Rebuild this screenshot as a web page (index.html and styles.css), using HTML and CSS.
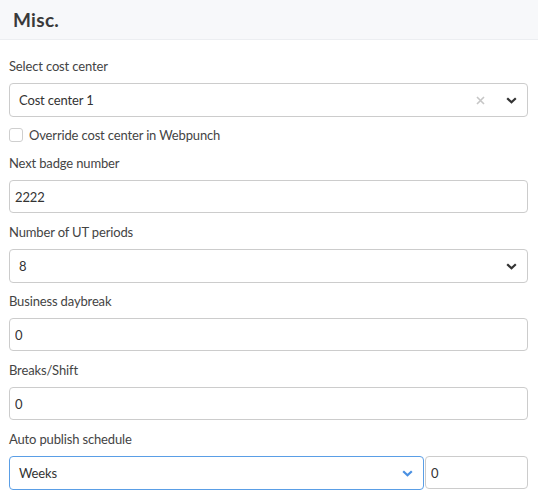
FILE: index.html
```html
<!DOCTYPE html>
<html lang="en">
<head>
    <meta charset="UTF-8">
    <meta name="viewport" content="width=device-width, initial-scale=1.0">
    <title>Misc.</title>
    <link rel="stylesheet" href="styles.css">
</head>
<body>
    <div class="panel">
        <div class="panel-header">
            <h2 class="panel-title">Misc.</h2>
        </div>
        <div class="panel-body">
            <div class="field">
                <label class="field-label">Select cost center</label>
                <div class="select">
                    <span class="select-value">Cost center 1</span>
                    <span class="select-clear">
                        <svg width="9" height="9" viewBox="0 0 9 9"><path d="M1 1L8 8M8 1L1 8" stroke="#c6c6c6" stroke-width="1.6"/></svg>
                    </span>
                    <span class="select-arrow">
                        <svg width="11" height="7" viewBox="0 0 11 7"><path d="M1.2 1.2L5.5 5.3L9.8 1.2" fill="none" stroke="#333" stroke-width="2.2"/></svg>
                    </span>
                </div>
            </div>
            <label class="check-row">
                <span class="checkbox"></span>
                <span>Override cost center in Webpunch</span>
            </label>
            <div class="field">
                <label class="field-label">Next badge number</label>
                <input class="text-input" type="text" value="2222">
            </div>
            <div class="field">
                <label class="field-label">Number of UT periods</label>
                <div class="select">
                    <span class="select-value">8</span>
                    <span class="select-arrow">
                        <svg width="11" height="7" viewBox="0 0 11 7"><path d="M1.2 1.2L5.5 5.3L9.8 1.2" fill="none" stroke="#333" stroke-width="2.2"/></svg>
                    </span>
                </div>
            </div>
            <div class="field">
                <label class="field-label">Business daybreak</label>
                <input class="text-input" type="text" value="0">
            </div>
            <div class="field">
                <label class="field-label">Breaks/Shift</label>
                <input class="text-input" type="text" value="0">
            </div>
            <div class="field">
                <label class="field-label">Auto publish schedule</label>
                <div class="inline-group">
                    <div class="select select-focused">
                        <span class="select-value">Weeks</span>
                        <span class="select-arrow">
                            <svg width="11" height="7" viewBox="0 0 11 7"><path d="M1.2 1.2L5.5 5.3L9.8 1.2" fill="none" stroke="#4a90e2" stroke-width="2.2"/></svg>
                        </span>
                    </div>
                    <input class="text-input small-input" type="text" value="0">
                </div>
            </div>
        </div>
    </div>
</body>
</html>
```

FILE: styles.css
```css
body {
    margin: 0;
    padding: 0;
    background: #ffffff;
    font-family: 'Lato', 'Open Sans', sans-serif;
    font-size: 13px;
    letter-spacing: -0.15px;
    color: #333333;
}

.panel-header {
    height: 40px;
    box-sizing: border-box;
    background-color: #f7f8fa;
    border-bottom: 1px solid #eceef1;
    padding: 0 13px;
    display: flex;
    align-items: center;
}

.panel-title {
    margin: 0;
    font-size: 19px;
    font-weight: bold;
    color: #3a3a3a;
    letter-spacing: 0.3px;
}

.panel-body {
    padding: 17px 10px 0 9px;
}

.field {
    margin-bottom: 10px;
}

.field-label {
    display: block;
    line-height: 18px;
    margin-bottom: 8px;
    color: #444444;
}

.select {
    height: 34px;
    box-sizing: border-box;
    border: 1px solid #cccccc;
    border-radius: 4px;
    display: flex;
    align-items: center;
    padding-left: 9px;
    background: #ffffff;
}

.field:has(.select) {
    margin-bottom: 9px;
}

.select-value {
    flex: 1;
    color: #333333;
}

.select-clear {
    display: flex;
    width: 20px;
    margin-right: 6px;
    justify-content: center;
}

.select-arrow {
    display: flex;
    width: 31px;
    justify-content: center;
}

.select-focused {
    border-color: #5a9ee6;
}

.text-input {
    display: block;
    width: 100%;
    height: 33px;
    box-sizing: border-box;
    border: 1px solid #cccccc;
    border-radius: 4px;
    padding: 0 5px;
    font-family: inherit;
    font-size: 13px;
    letter-spacing: -0.15px;
    color: #333333;
    outline: none;
}

.check-row {
    display: flex;
    align-items: center;
    gap: 6px;
    line-height: 18px;
    margin: 0 0 10px;
    color: #444444;
}

.checkbox {
    width: 14px;
    height: 14px;
    box-sizing: border-box;
    border: 1px solid #cfcfcf;
    border-radius: 3px;
}

.inline-group {
    display: flex;
    gap: 1px;
}

.inline-group .select {
    flex: 1;
}

.small-input {
    width: 103px;
    height: 33px;
}
```
